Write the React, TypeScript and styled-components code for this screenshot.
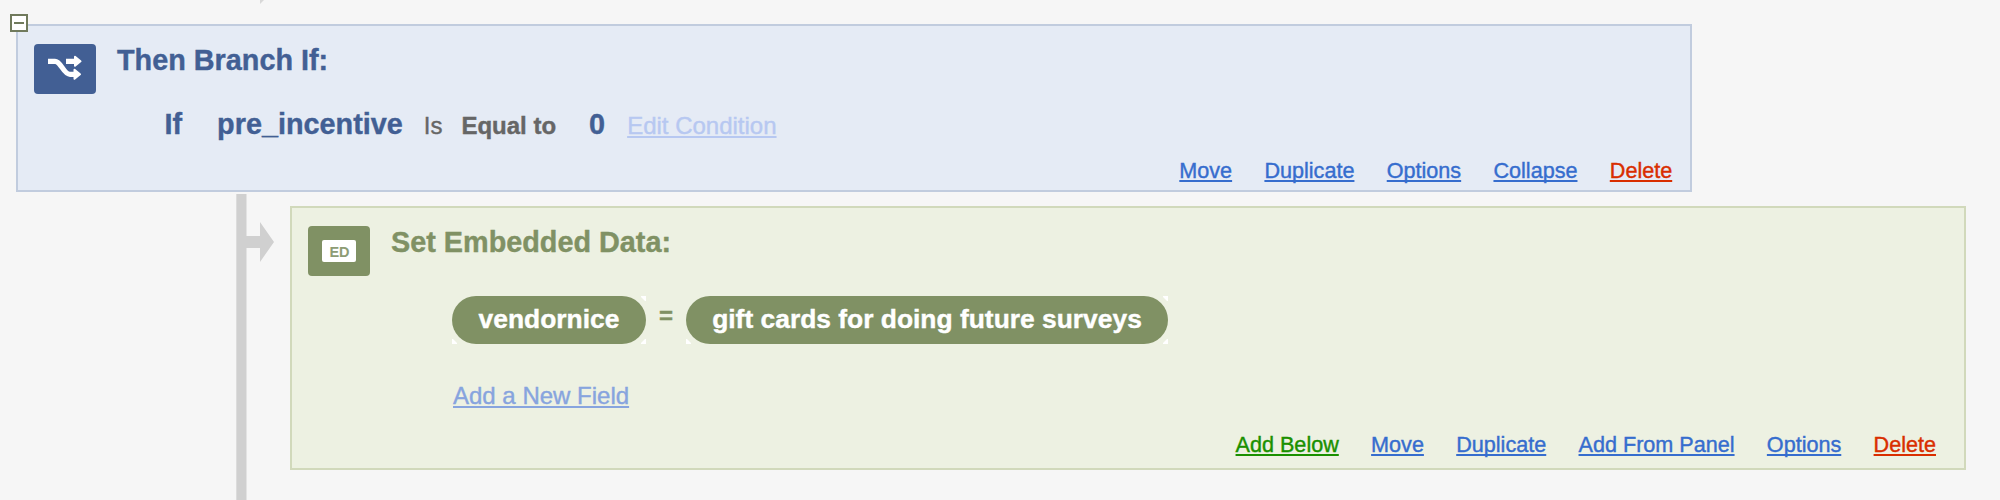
import React from 'react';
import styled, { createGlobalStyle } from 'styled-components';

const Global = createGlobalStyle`
  body {
    margin: 0;
    background: #f6f6f6;
    font-family: "Liberation Sans", Arial, sans-serif;
    font-size: 24px;
    -webkit-text-stroke: 0.4px currentColor;
  }
`;

const Page = styled.main`
  position: relative;
  display: flex;
  flex-direction: column;
  box-sizing: border-box;
  width: 2000px;
  height: 500px;
  padding: 24px 0 0 16px;
  overflow: hidden;
`;

const themes = {
  branch: { bg: '#e5ebf5', border: '#c1ccde', main: '#425f94' },
  data: { bg: '#edf1e2', border: '#d1d9bb', main: '#809164' },
};
type Kind = keyof typeof themes;

const Block = styled.section<{ $kind: Kind; $height: number }>`
  position: relative;
  display: flex;
  flex-direction: column;
  box-sizing: border-box;
  flex: none;
  width: 1676px;
  height: ${p => p.$height}px;
  padding: 18px 17px 0 16px;
  border: 2px solid ${p => themes[p.$kind].border};
  background: ${p => themes[p.$kind].bg};
  color: ${p => themes[p.$kind].main};
`;

const Header = styled.header`
  display: flex;
  height: 50px;
  gap: 21px;
`;

const Badge = styled.span<{ $kind: Kind }>`
  display: block;
  width: 62px;
  height: 50px;
  border-radius: 4px;
  background: ${p => themes[p.$kind].main};
  svg { display: block; }
`;

const Title = styled.h2`
  margin: 0;
  font-size: 28.8px;
  line-height: 32px;
`;

const Condition = styled.div`
  display: flex;
  align-items: baseline;
  margin: 13px 0 0 130.5px;
  line-height: 34px;
  white-space: pre;
`;

const Term = styled.b<{ $gap: number }>`
  margin-right: ${p => p.$gap}px;
  font-size: 28.8px;
`;

const Operator = styled.span<{ $bold?: boolean; $gap: number }>`
  margin-right: ${p => p.$gap}px;
  color: #666;
  font-weight: ${p => (p.$bold ? 700 : 400)};
`;

const Link = styled.a<{ $color: string }>`
  color: ${p => p.$color};
  text-decoration: underline;
  text-decoration-thickness: 2px;
  text-underline-offset: 2px;
  text-decoration-skip-ink: none;
`;

const Actions = styled.nav<{ $kind: Kind }>`
  display: flex;
  justify-content: flex-end;
  gap: 32.3px;
  margin-top: auto;
  margin-right: ${p => (p.$kind === 'data' ? 11 : 0.8)}px;
  height: ${p => (p.$kind === 'data' ? 36 : 32)}px;
  line-height: 25px;
  font-size: 21.6px;
`;

const Branches = styled.div`
  display: flex;
  height: 306px;
  margin-top: 2px;
  padding-left: 220px;
`;

const Connector = styled.svg`
  display: block;
  flex: none;
  width: 54px;
  height: 306px;
`;

const Child = styled.div`
  padding-top: 12px;
`;

const Field = styled.div`
  display: flex;
  margin: 20px 0 0 144px;
`;

const PillFrame = styled.span<{ $width: number }>`
  box-sizing: border-box;
  width: ${p => p.$width}px;
  height: 48px;
  background:
    linear-gradient(to top right, transparent 35%, #fff 45%) top right / 5px 5px no-repeat,
    linear-gradient(to bottom right, transparent 35%, #fff 45%) bottom right / 5px 5px no-repeat,
    linear-gradient(to bottom left, transparent 35%, #fff 45%) bottom left / 5px 5px no-repeat;
`;

const Pill = styled.b`
  display: block;
  height: 48px;
  border-radius: 24px;
  background: #809164;
  color: #fff;
  font-size: 26.4px;
  line-height: 46px;
  text-align: center;
  white-space: nowrap;
`;

const Equals = styled.b`
  width: 40px;
  line-height: 39px;
  text-align: center;
`;

const AddField = styled.div`
  margin: 38px 0 0 145px;
  line-height: 28px;
`;

const Toggle = styled.svg`
  position: absolute;
  left: 9px;
  top: 14px;
`;

const ArrowEnd = styled.svg`
  position: absolute;
  left: 260px;
  top: 0;
`;

const BLUE = '#366dce';
const RED = '#d92e00';
const GREEN = '#1a9000';

const ActionBar = ({ kind, items }: { kind: Kind; items: [string, string][] }) => (
  <Actions $kind={kind}>
    {items.map(([label, color]) => <Link key={label} $color={color}>{label}</Link>)}
  </Actions>
);

export default function App() {
  return (
    <Page>
      <Global />
      <ArrowEnd width="5" height="5" viewBox="0 0 5 5">
        <path d="M0 0h4L0 4z" fill="#d8d8d8" />
      </ArrowEnd>
      <Block $kind="branch" $height={168}>
        <Header>
          <Badge $kind="branch">
            <svg width="62" height="50" viewBox="0 0 62 50" fill="none" stroke="#fff" strokeWidth="5.2">
              <path d="M14 17.300h7c6 0 8.500 13 15 13h5M32 17.300h9" />
              <path d="M41 12.800l5.500 4.500-5.500 4.500zM40.500 25.800l5.500 4.500-5.500 4.500z" fill="#fff" strokeWidth="2" strokeLinejoin="round" />
            </svg>
          </Badge>
          <Title>Then Branch If:</Title>
        </Header>
        <Condition>
          <Term $gap={35}>If</Term>
          <Term $gap={21}>pre_incentive</Term>
          <Operator $gap={19}>Is</Operator>
          <Operator $bold $gap={33}>Equal to</Operator>
          <Term $gap={22}>0</Term>
          <Link $color="#b7c8f1">Edit Condition</Link>
        </Condition>
        <ActionBar kind="branch" items={[['Move', BLUE], ['Duplicate', BLUE], ['Options', BLUE], ['Collapse', BLUE], ['Delete', RED]]} />
      </Block>
      <Branches>
        <Connector viewBox="0 0 54 306">
          <path d="M0 0h10.500v306H0z" fill="#d0d0d0" />
          <path d="M0 0h1v306H0z" fill="#dcdcdc" />
          <path d="M10 42h14V28l14 20-14 20V54H10z" fill="#d0d0d0" />
        </Connector>
        <Child>
          <Block $kind="data" $height={264}>
            <Header>
              <Badge $kind="data">
                <svg width="62" height="50" viewBox="0 0 62 50">
                  <rect x="14" y="14" width="34" height="22" rx="2" fill="#fff" />
                  <text x="31.500" y="30.500" textAnchor="middle" fontSize="14.500" fontWeight="700" fill="#8d9c74">ED</text>
                </svg>
              </Badge>
              <Title>Set Embedded Data:</Title>
            </Header>
            <Field>
              <PillFrame $width={194}><Pill>vendornice</Pill></PillFrame>
              <Equals>=</Equals>
              <PillFrame $width={482}><Pill>gift cards for doing future surveys</Pill></PillFrame>
            </Field>
            <AddField><Link $color="#87a4de">Add a New Field</Link></AddField>
            <ActionBar kind="data" items={[['Add Below', GREEN], ['Move', BLUE], ['Duplicate', BLUE], ['Add From Panel', BLUE], ['Options', BLUE], ['Delete', RED]]} />
          </Block>
        </Child>
      </Branches>
      <Toggle width="19" height="18" viewBox="0 0 19 18">
        <rect x="2" y="1" width="16" height="16" fill="#fff" stroke="#707a5c" strokeWidth="2" />
        <path d="M5 9h10" stroke="#707a5c" strokeWidth="2" />
      </Toggle>
    </Page>
  );
}
